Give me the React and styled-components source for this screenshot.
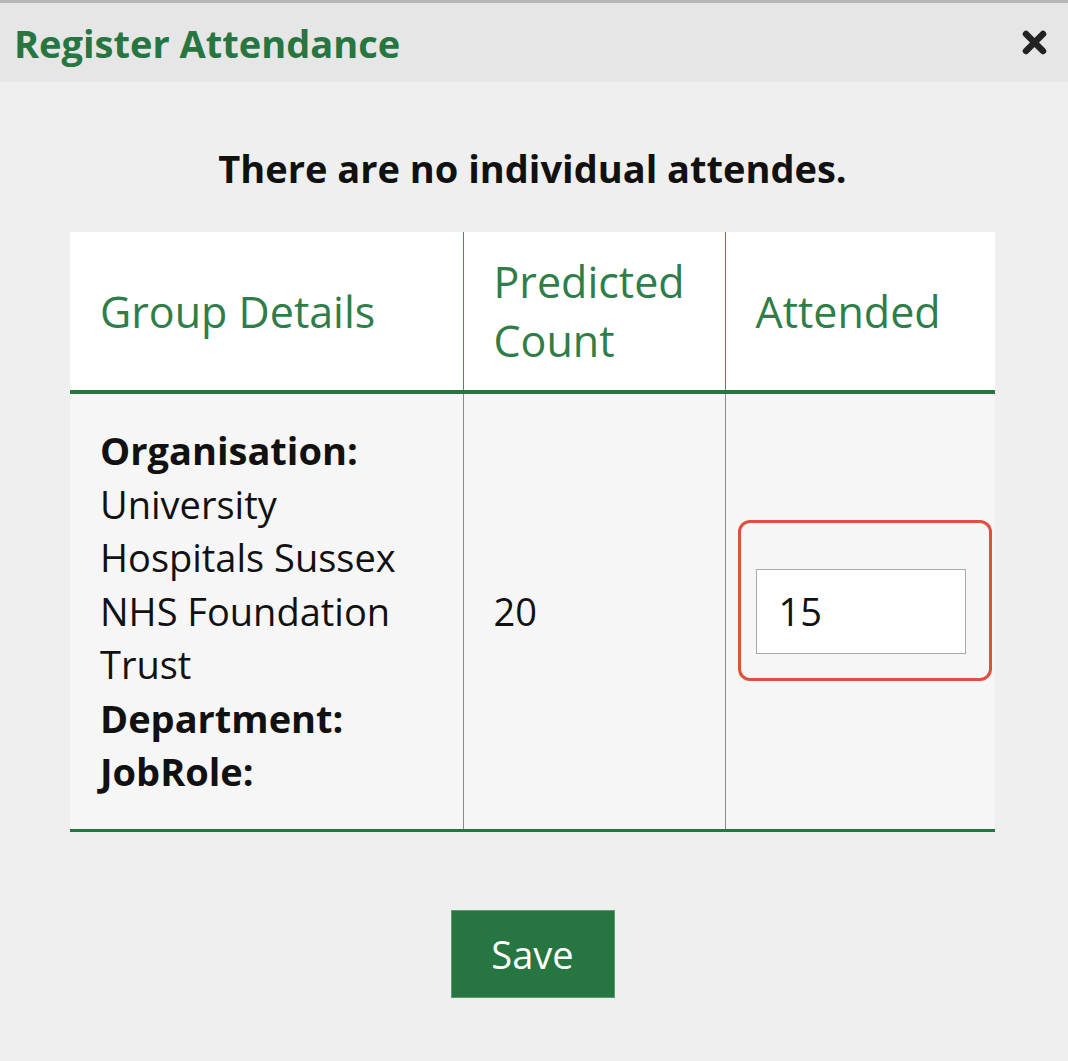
import React from 'react';
import styled, { createGlobalStyle } from 'styled-components';

const GlobalStyle = createGlobalStyle`
  html, body {
    margin: 0;
    padding: 0;
    background: #efefef;
    font-family: "Open Sans", "Liberation Sans", sans-serif;
  }
`;

const green = '#277540';

const Modal = styled.div`
  width: 1068px;
  height: 1061px;
  background: #efefef;
  border-top: 3px solid #b5b5b5;
  box-sizing: border-box;
`;

const Header = styled.div`
  height: 79px;
  background: #e6e6e6;
  display: flex;
  align-items: center;
  justify-content: space-between;
  padding: 0 21px 0 14px;
`;

const Title = styled.h2`
  margin: 0;
  font-size: 38px;
  font-weight: 700;
  color: ${green};
  letter-spacing: 0;
`;

const Close = styled.button`
  border: 0;
  background: none;
  padding: 0;
  width: 25px;
  height: 25px;
  display: flex;
  cursor: pointer;
`;

const Body = styled.div`
  padding: 62px 73px 0 70px;
  display: flex;
  flex-direction: column;
  align-items: center;
`;

const Notice = styled.p`
  margin: 0 0 40px;
  font-size: 38px;
  font-weight: 700;
  color: #111;
  line-height: 48px;
`;

const Table = styled.table`
  width: 100%;
  border-collapse: collapse;
  table-layout: fixed;
  border-bottom: 3px solid ${green};
`;

const Th = styled.th`
  background: #fff;
  color: #2f7d48;
  font-weight: 400;
  font-size: 43px;
  line-height: 59px;
  text-align: left;
  padding: 20px 30px;
  height: 158px;
  box-sizing: border-box;
  border-bottom: 4px solid ${green};
  border-left: ${p => (p.$first ? '0' : '1px solid #4c8a5e')};
  width: ${p => p.$w}px;
`;

const Td = styled.td`
  background: #f6f6f6;
  color: #111;
  font-size: 38px;
  line-height: 53.5px;
  padding: 30px;
  vertical-align: middle;
  border-left: ${p => (p.$first ? '0' : '1px solid #8a8a8a')};
`;

const Label = styled.strong`
  display: block;
  font-weight: 700;
`;

const InputWrap = styled.div`
  position: relative;
  width: 210px;
`;

const Highlight = styled.div`
  position: absolute;
  left: -18px;
  right: -26px;
  top: -49px;
  bottom: -27px;
  border: 3px solid #e0503c;
  border-radius: 12px;
  pointer-events: none;
`;

const Input = styled.input`
  width: 210px;
  height: 85px;
  box-sizing: border-box;
  border: 1px solid #a9a9a9;
  background: #fff;
  font-family: inherit;
  font-size: 38px;
  color: #111;
  padding: 0 22px;
  outline: none;
`;

const SaveButton = styled.button`
  margin-top: 78px;
  width: 164px;
  height: 88px;
  background: ${green};
  color: #fff;
  border: 1px solid #5b9a6e;
  font-family: inherit;
  font-size: 38px;
  cursor: pointer;
`;

export default function App() {
  return (
    <>
      <GlobalStyle />
      <Modal>
        <Header>
          <Title>Register Attendance</Title>
          <Close aria-label="Close">
            <svg width="25" height="25" viewBox="0 0 25 25">
              <path d="M4 4L21 21M21 4L4 21" stroke="#222" strokeWidth="6.5" strokeLinecap="round" />
            </svg>
          </Close>
        </Header>
        <Body>
          <Notice>There are no individual attendes.</Notice>
          <Table>
            <thead>
              <tr>
                <Th $first $w={393}>Group Details</Th>
                <Th $w={262}>Predicted Count</Th>
                <Th $w={270}>Attended</Th>
              </tr>
            </thead>
            <tbody>
              <tr>
                <Td $first>
                  <Label>Organisation:</Label>
                  University Hospitals Sussex NHS Foundation Trust
                  <Label>Department:</Label>
                  <Label>JobRole:</Label>
                </Td>
                <Td>20</Td>
                <Td>
                  <InputWrap>
                    <Input defaultValue="15" />
                    <Highlight />
                  </InputWrap>
                </Td>
              </tr>
            </tbody>
          </Table>
          <SaveButton>Save</SaveButton>
        </Body>
      </Modal>
    </>
  );
}
